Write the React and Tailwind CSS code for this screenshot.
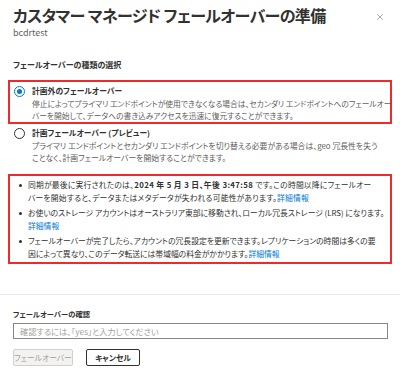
import { X } from 'lucide-react';

const Link = ({ children }) => <span className="text-[#0078d4]">{children}</span>;

const Radio = ({ checked }) => (
  <span
    className={
      'mt-[0.5px] flex h-[11px] w-[11px] shrink-0 items-center justify-center rounded-full border ' +
      (checked ? 'border-[#0078d4]' : 'border-[#323130]')
    }
  >
    {checked && <span className="h-[5px] w-[5px] rounded-full bg-[#0078d4]" />}
  </span>
);

const Bullet = ({ children, className = '' }) => (
  <li className="flex gap-[6px]">
    <span className="mt-[5.5px] h-[3px] w-[3px] shrink-0 rounded-full bg-[#323130]" />
    <div className={'whitespace-nowrap ' + className}>{children}</div>
  </li>
);

export default function App() {
  return (
    <div className="flex h-[379px] w-[400px] flex-col overflow-hidden bg-white font-['Noto_Sans_CJK_JP',sans-serif] text-[#323130] [font-feature-settings:'palt']">
      {/* header */}
      <div className="flex items-start justify-between pl-[13px] pr-[15px] pt-[5px]">
        <div>
          <h1 className="text-[16px] font-semibold leading-[20px] tracking-[-0.6px]">
            カスタマー マネージド フェールオーバーの準備
          </h1>
          <p className="mt-[2px] text-[9px] leading-[12px] text-[#605e5c]">bcdrtest</p>
        </div>
        <X className="mt-[7px] h-[10px] w-[10px] text-[#605e5c]" strokeWidth={1.3} />
      </div>

      <h2 className="ml-[13px] mt-[21px] text-[8px] font-semibold leading-[10px]">
        フェールオーバーの種類の選択
      </h2>

      {/* option 1 */}
      <div className="mx-[8px] mt-[10px] flex gap-[7px] border-2 border-[#ee2b2b] pb-[1px] pl-[4px] pt-[3px]">
        <Radio checked />
        <div className="whitespace-nowrap">
          <div className="text-[7.8px] font-bold leading-[11px]">計画外のフェールオーバー</div>
          <div className="mt-[2px] text-[7.75px] leading-[11.5px] text-[#605e5c]">
            停止によってプライマリ エンドポイントが使用できなくなる場合は、セカンダリ エンドポイントへのフェールオー
            <br />
            バーを開始して、データへの書き込みアクセスを迅速に復元することができます。
          </div>
        </div>
      </div>

      {/* option 2 */}
      <div className="ml-[14px] mt-[3px] flex gap-[7px]">
        <Radio />
        <div className="whitespace-nowrap">
          <div className="text-[7.8px] font-bold leading-[11px]">計画フェールオーバー (プレビュー)</div>
          <div className="mt-[2px] text-[7.85px] leading-[11.5px] text-[#605e5c]">
            プライマリ エンドポイントとセカンダリ エンドポイントを切り替える必要がある場合は、geo 冗長性を失う
            <br />
            ことなく、計画フェールオーバーを開始することができます。
          </div>
        </div>
      </div>

      {/* notes */}
      <ul className="mx-[8px] mt-[11px] flex flex-col gap-[2px] border-2 border-[#ee2b2b] pb-[2px] pl-[9px] pt-[2px] text-[7.8px] leading-[13px]">
        <Bullet className="tracking-[0.2px]">
          同期が最後に実行されたのは、<b className="font-bold tracking-[0.4px]">2024 年 5 月 3 日、午後 3:47:58</b> です。この時間以降にフェールオー
          <br />
          バーを開始すると、データまたはメタデータが失われる可能性があります。<Link>詳細情報</Link>
        </Bullet>
        <Bullet>
          お使いのストレージ アカウントはオーストラリア東部に移動され、ローカル冗長ストレージ (LRS) になります。
          <br />
          <Link>詳細情報</Link>
        </Bullet>
        <Bullet>
          フェールオーバーが完了したら、アカウントの冗長設定を更新できます。レプリケーションの時間は多くの要
          <br />
          因によって異なり、このデータ転送には帯域幅の料金がかかります。<Link>詳細情報</Link>
        </Bullet>
      </ul>

      {/* footer */}
      <div className="mt-auto border-t border-[#edebe9] px-[13px] pb-[13px] pt-[14px]">
        <label className="block text-[7.3px] font-semibold leading-[10px]">フェールオーバーの確認</label>
        <div className="mt-[4px] flex h-[16px] w-[375px] items-center border border-[#8a8886] px-[6px] text-[8.2px] text-[#a19f9d]">
          確認するには、「yes」と入力してください
        </div>
        <div className="mt-[10px] flex gap-[13px]">
          <button className="flex h-[17px] w-[60px] items-center justify-center rounded-[2px] border border-[#d2d0ce] bg-[#f3f2f1] text-[7.8px] text-[#a19f9d]">
            フェールオーバー
          </button>
          <button className="flex h-[17px] w-[54px] items-center justify-center rounded-[2px] border border-[#323130] bg-white text-[7.8px] font-bold">
            キャンセル
          </button>
        </div>
      </div>
    </div>
  );
}
